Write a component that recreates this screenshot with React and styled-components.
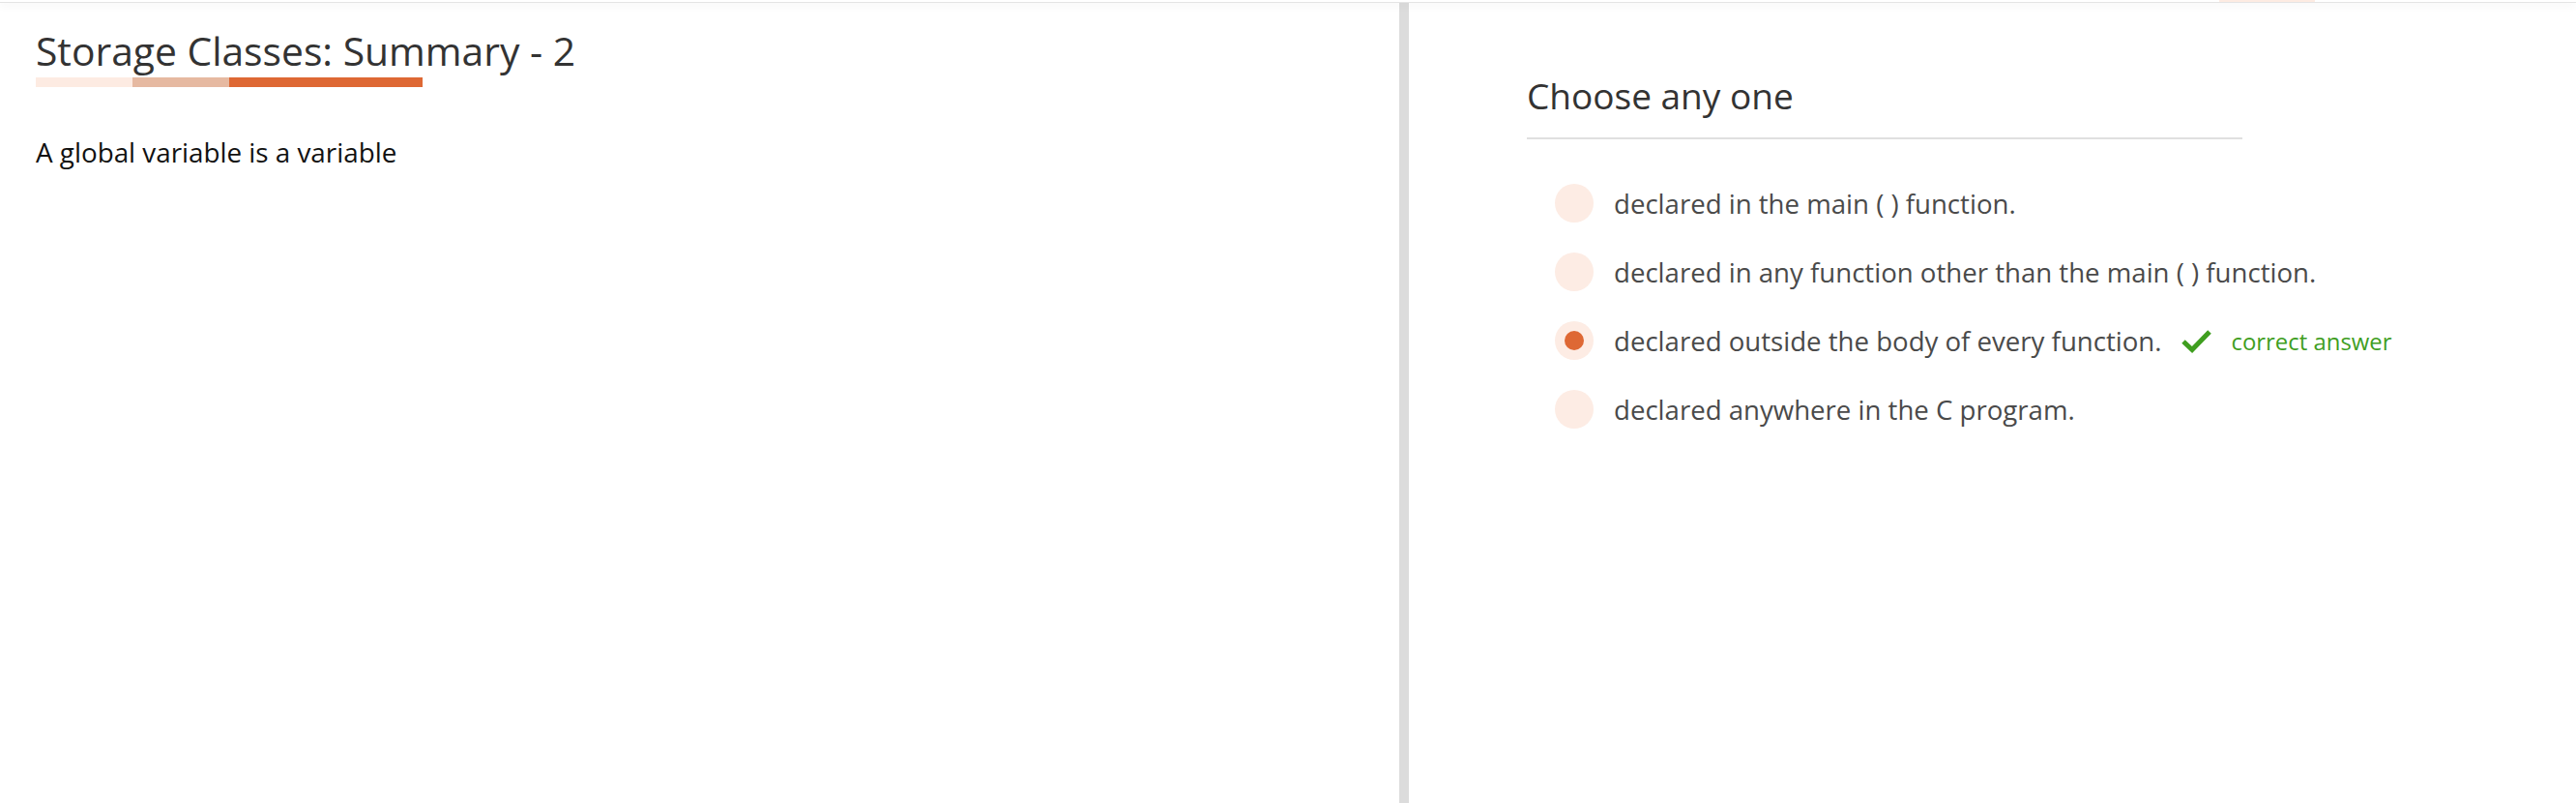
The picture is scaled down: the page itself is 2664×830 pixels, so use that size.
import React from 'react'
import styled, { createGlobalStyle } from 'styled-components'

const GlobalStyle = createGlobalStyle`
    html, body {
        margin: 0;
        padding: 0;
        background: #ffffff;
    }
    body {
        font-family: "Open Sans", "Noto Sans", sans-serif;
    }
`

const Page = styled.div`
    display: flex;
    flex-direction: column;
    height: 100vh;
    overflow: hidden;
`

const TopBar = styled.div`
    position: relative;
    z-index: 2;
    display: flex;
    height: 2px;
    border-bottom: 1px solid #e4e4e4;
    box-shadow: 0 2px 10px rgba(0, 0, 0, 0.08);
`

const TopTab = styled.div`
    margin-left: 2295px;
    width: 99px;
    height: 2px;
    background: #fdebe2;
`

const Main = styled.div`
    display: flex;
    flex: 1;
`

const LeftPane = styled.section`
    width: 1447px;
    padding: 25px 37px 0;
    box-sizing: border-box;
`

const Divider = styled.div`
    width: 10px;
    background: #dcdcdc;
`

const RightPane = styled.section`
    flex: 1;
    padding: 74px 0 0 122px;
`

const Title = styled.h1`
    margin: 0;
    font-size: 40.8px;
    line-height: 48px;
    font-weight: 400;
    color: #333333;
`

const TitleBar = styled.div`
    display: flex;
    margin-top: 4px;
    height: 10px;
`

const BarPart = styled.span`
    width: ${p => p.$w}px;
    background: ${p => p.$c};
`

const Question = styled.p`
    margin: 47px 0 0;
    font-size: 27.8px;
    line-height: 41px;
    color: #111111;
`

const Heading = styled.h2`
    width: 740px;
    margin: 0;
    padding-bottom: 21px;
    border-bottom: 2px solid #e0e0e0;
    font-size: 37px;
    line-height: 44px;
    font-weight: 400;
    color: #333333;
`

const Options = styled.ul`
    list-style: none;
    margin: 46px 0 0;
    padding: 0 0 0 29px;
    display: flex;
    flex-direction: column;
    gap: 31px;
`

const Option = styled.li`
    display: flex;
    align-items: center;
    height: 40px;
`

const Radio = styled.span`
    display: flex;
    align-items: center;
    justify-content: center;
    flex-shrink: 0;
    width: 40px;
    height: 40px;
    border-radius: 50%;
    background: #fdece4;
    margin-right: 21px;

    &::after {
        content: '';
        width: 20px;
        height: 20px;
        border-radius: 50%;
        background: ${p => (p.$checked ? '#de6834' : 'transparent')};
    }
`

const OptionText = styled.span`
    font-size: 27.6px;
    line-height: 40px;
    color: #4a4a4a;
`

const Correct = styled.span`
    display: flex;
    align-items: center;
    margin-left: 20px;
    font-size: 23.9px;
    color: #3f9e1f;

    svg {
        margin-right: 21px;
    }
`

const Check = () => (
    <svg width="31" height="25" viewBox="0 0 31 25">
        <path d="M2 13 L11 21.5 L29 3" fill="none" stroke="#3f9e1f" strokeWidth="5" />
    </svg>
)

const options = [
    { text: 'declared in the main ( ) function.' },
    { text: 'declared in any function other than the main ( ) function.' },
    { text: 'declared outside the body of every function.', checked: true },
    { text: 'declared anywhere in the C program.' },
]

const App = () => {
    return (
        <Page>
            <GlobalStyle />
            <TopBar>
                <TopTab />
            </TopBar>
            <Main>
                <LeftPane>
                    <Title>Storage Classes: Summary - 2</Title>
                    <TitleBar>
                        <BarPart $w={100} $c="#fdebe2" />
                        <BarPart $w={100} $c="#e6b9a1" />
                        <BarPart $w={200} $c="#de6834" />
                    </TitleBar>
                    <Question>A global variable is a variable</Question>
                </LeftPane>
                <Divider />
                <RightPane>
                    <Heading>Choose any one</Heading>
                    <Options>
                        {options.map((opt, i) => (
                            <Option key={i}>
                                <Radio $checked={opt.checked} />
                                <OptionText>{opt.text}</OptionText>
                                {opt.checked && (
                                    <Correct>
                                        <Check />
                                        correct answer
                                    </Correct>
                                )}
                            </Option>
                        ))}
                    </Options>
                </RightPane>
            </Main>
        </Page>
    )
}

export default App
